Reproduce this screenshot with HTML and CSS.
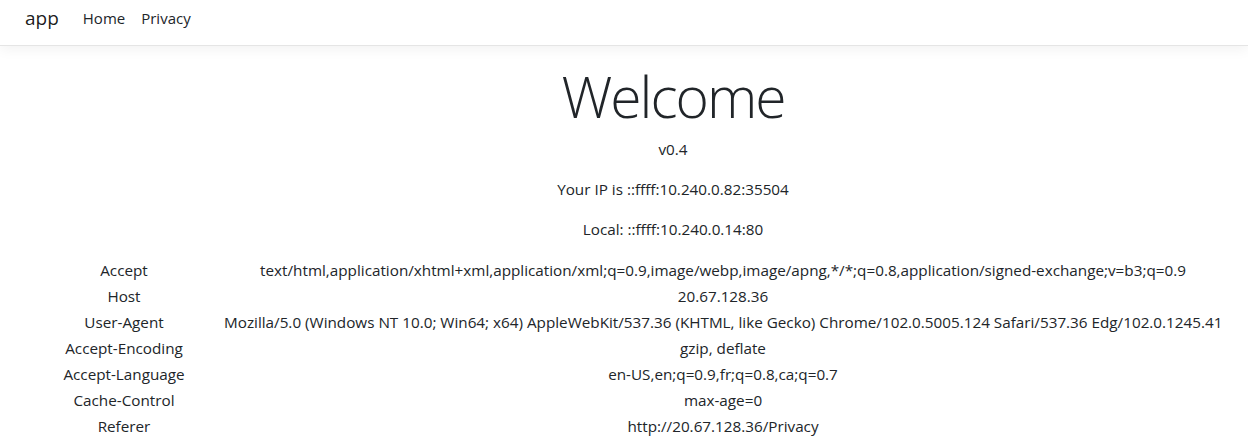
FILE: index.html
```html
<!DOCTYPE html>
<html lang="en">
<head>
<meta charset="utf-8">
<title>app</title>
<link rel="stylesheet" href="styles.css">
</head>
<body>
<header class="navbar">
  <a class="brand" href="#">app</a>
  <nav class="nav-links">
    <a class="nav-link" href="#">Home</a>
    <a class="nav-link" href="#">Privacy</a>
  </nav>
</header>
<main class="main">
  <section class="hero">
    <h1 class="title">Welcome</h1>
    <p class="line">v0.4</p>
    <p class="line">Your IP is ::ffff:10.240.0.82:35504</p>
    <p class="line">Local: ::ffff:10.240.0.14:80</p>
  </section>
  <div class="headers">
    <div class="key">Accept</div><div class="val">text/html,application/xhtml+xml,application/xml;q=0.9,image/webp,image/apng,*/*;q=0.8,application/signed-exchange;v=b3;q=0.9</div>
    <div class="key">Host</div><div class="val">20.67.128.36</div>
    <div class="key">User-Agent</div><div class="val">Mozilla/5.0 (Windows NT 10.0; Win64; x64) AppleWebKit/537.36 (KHTML, like Gecko) Chrome/102.0.5005.124 Safari/537.36 Edg/102.0.1245.41</div>
    <div class="key">Accept-Encoding</div><div class="val">gzip, deflate</div>
    <div class="key">Accept-Language</div><div class="val">en-US,en;q=0.9,fr;q=0.8,ca;q=0.7</div>
    <div class="key">Cache-Control</div><div class="val">max-age=0</div>
    <div class="key">Referer</div><div class="val">http://20.67.128.36/Privacy</div>
  </div>
</main>
</body>
</html>
```
FILE: styles.css
```css
html, body {
  margin: 0;
  padding: 0;
  background: #fff;
}
body {
  font-family: "Open Sans", "Noto Sans", sans-serif;
  font-size: 15.25px;
  color: #212529;
  overflow: hidden;
}
.navbar {
  height: 36px;
  padding-bottom: 9px;
  border-bottom: 1px solid #e5e5e5;
  box-shadow: 0 4px 12px rgba(0, 0, 0, 0.05);
  display: flex;
  align-items: center;
  padding-left: 25px;
}
.brand {
  font-size: 19px;
  color: rgba(0, 0, 0, 0.9);
  text-decoration: none;
  margin-right: 24px;
}
.nav-links {
  display: flex;
  gap: 16px;
}
.nav-link {
  color: #212529;
  text-decoration: none;
  font-size: 15px;
}
.main {
  padding-top: 16px;
}
.hero {
  padding-left: 98px;
  text-align: center;
}
.title {
  font-size: 57px;
  font-weight: 300;
  letter-spacing: -2px;
  line-height: 68px;
  margin: 0 0 7px;
}
.line {
  margin: 0 0 16px;
  line-height: 24px;
}
.headers {
  display: grid;
  grid-template-columns: 200px 998px;
  margin-left: 24px;
  text-align: center;
}
.key, .val {
  line-height: 24px;
  padding: 1px 0;
  white-space: nowrap;
}
```
